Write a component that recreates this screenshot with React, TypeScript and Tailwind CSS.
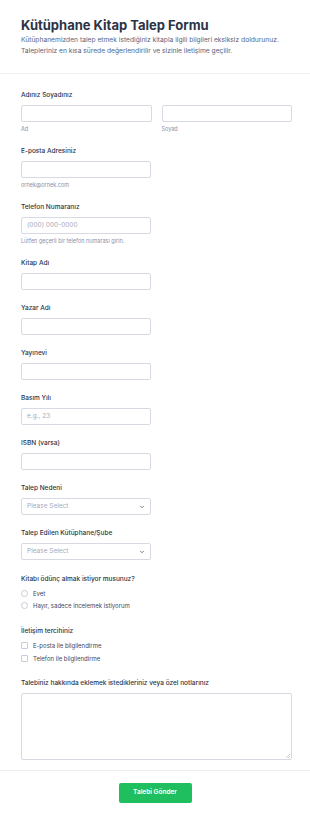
import { ChevronDown } from "lucide-react"

const font = { fontFamily: "Inter, 'Noto Sans', sans-serif" }

function Label({ children }: { children: React.ReactNode }) {
  return <div className="h-[10px] text-[6.5px] leading-[10px] font-medium text-[#2c3345]">{children}</div>
}

function Hint({ children }: { children: React.ReactNode }) {
  return <div className="mt-[3px] text-[5.5px] leading-[8px] text-[#8d8fa8]">{children}</div>
}

function Input({ placeholder, className = "w-[130px]" }: { placeholder?: string; className?: string }) {
  return (
    <div
      className={`${className} h-[17px] rounded-[2px] border border-[#d8dae3] bg-white flex items-center px-[5px] text-[6.5px] text-[#a6a9bb]`}
    >
      {placeholder}
    </div>
  )
}

function Select() {
  return (
    <div className="w-[130px] h-[17px] rounded-[2px] border border-[#d8dae3] bg-white flex items-center justify-between px-[5px] text-[6.5px] text-[#a6a9bb]">
      <span>Please Select</span>
      <ChevronDown className="w-[6px] h-[6px] text-[#4b5563]" strokeWidth={3} />
    </div>
  )
}

function Field({ label, hint, placeholder }: { label: string; hint?: string; placeholder?: string }) {
  return (
    <div className="mt-[13px]">
      <Label>{label}</Label>
      <div className="mt-[5px]">
        <Input placeholder={placeholder} />
      </div>
      {hint && <Hint>{hint}</Hint>}
    </div>
  )
}

function SelectField({ label }: { label: string }) {
  return (
    <div className="mt-[13px]">
      <Label>{label}</Label>
      <div className="mt-[5px]">
        <Select />
      </div>
    </div>
  )
}

function Choice({ text, round }: { text: string; round?: boolean }) {
  return (
    <div className="flex items-center gap-[5px] h-[12px]">
      <span
        className={`w-[7px] h-[7px] border border-[#c9ccd8] bg-white ${round ? "rounded-full" : "rounded-[1px]"}`}
      />
      <span className="text-[6px] text-[#3f4559]">{text}</span>
    </div>
  )
}

export default function App() {
  return (
    <div className="w-[310px] min-h-[821px] bg-white" style={font}>
      <div className="pl-[21px] pr-[18px] pt-[17px] pb-[16px] border-b border-[#eceef2]">
        <h1 className="text-[13px] leading-[16px] font-bold text-[#2c3345]">Kütüphane Kitap Talep Formu</h1>
        <p className="mt-[2px] text-[6.7px] leading-[11px] text-[#57647e]">
          Kütüphanemizden talep etmek istediğiniz kitapla ilgili bilgileri eksiksiz doldurunuz. Talepleriniz en kısa sürede
          değerlendirilir ve sizinle iletişime geçilir.
        </p>
      </div>

      <div className="pl-[21px] pr-[18px] pt-[3px] pb-[10px] border-b border-[#eceef2]">
        <div className="mt-[13px]">
          <Label>Adınız Soyadınız</Label>
          <div className="mt-[5px] grid grid-cols-2 gap-[10px]">
            <div>
              <Input className="w-full" />
              <Hint>Ad</Hint>
            </div>
            <div>
              <Input className="w-full" />
              <Hint>Soyad</Hint>
            </div>
          </div>
        </div>

        <Field label="E-posta Adresiniz" hint="ornek@ornek.com" />
        <Field label="Telefon Numaranız" placeholder="(000) 000-0000" hint="Lütfen geçerli bir telefon numarası girin." />
        <Field label="Kitap Adı" />
        <Field label="Yazar Adı" />
        <Field label="Yayınevi" />
        <Field label="Basım Yılı" placeholder="e.g., 23" />
        <Field label="ISBN (varsa)" />
        <SelectField label="Talep Nedeni" />
        <SelectField label="Talep Edilen Kütüphane/Şube" />

        <div className="mt-[14px]">
          <Label>Kitabı ödünç almak istiyor musunuz?</Label>
          <div className="mt-[3px]">
            <Choice round text="Evet" />
            <Choice round text="Hayır, sadece incelemek istiyorum" />
          </div>
        </div>

        <div className="mt-[15px]">
          <Label>İletişim tercihiniz</Label>
          <div className="mt-[3px] flex flex-col gap-[1px]">
            <Choice text="E-posta ile bilgilendirme" />
            <Choice text="Telefon ile bilgilendirme" />
          </div>
        </div>

        <div className="mt-[14px]">
          <Label>Talebiniz hakkında eklemek istedikleriniz veya özel notlarınız</Label>
          <div className="mt-[5px] relative h-[67px] w-full rounded-[2px] border border-[#d8dae3] bg-white">
            <svg className="absolute right-[1px] bottom-[1px]" width="4" height="4" viewBox="0 0 4 4">
              <path d="M4 0L0 4M4 2L2 4" stroke="#b0b3c2" strokeWidth="0.6" />
            </svg>
          </div>
        </div>
      </div>

      <div className="flex justify-center pt-[12px]">
        <button className="w-[73px] h-[20px] rounded-[2px] bg-[#1fbf5f] text-white text-[6.5px] font-semibold">
          Talebi Gönder
        </button>
      </div>
    </div>
  )
}
